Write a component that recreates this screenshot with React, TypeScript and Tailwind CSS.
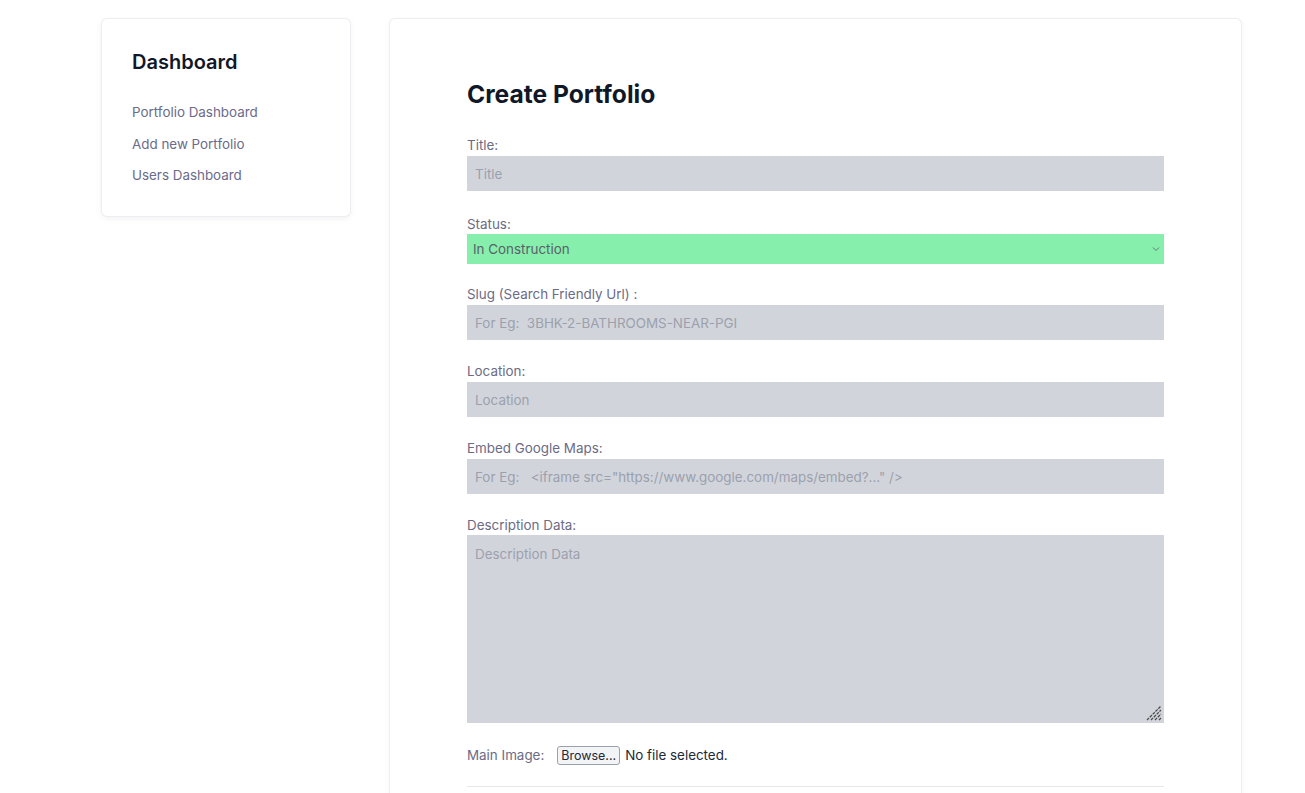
import React from "react";

const links = ["Portfolio Dashboard", "Add new Portfolio", "Users Dashboard"];

interface FieldProps {
    label: string,
    placeholder: string,
    space?: string
}

const Field = ({ label, placeholder, space = "mb-[21px]" }: FieldProps) => (
    <div className={space}>
        <label className="block text-[13.4px] leading-5 text-[#6b6b85]">{label}</label>
        <input
            className="mt-px block w-full h-[35px] bg-[#d1d5db] px-2 text-[13.4px] text-gray-700 placeholder:text-[#9ca0ad] outline-none"
            placeholder={placeholder}
        />
    </div>
);

export default function App() {
    return (
        <div className="min-h-screen bg-white font-['Inter',sans-serif] overflow-hidden">
            <div className="flex items-start gap-[38px] pl-[101px] pt-[18px]">
                <aside className="w-[250px] shrink-0 rounded-md border border-gray-200/70 bg-white px-[30px] pt-[29px] pb-[31px] shadow-[0_2px_6px_rgba(0,0,0,0.05)]">
                    <h2 className="text-xl leading-7 font-semibold text-gray-900">Dashboard</h2>
                    <ul className="mt-[26px] flex flex-col gap-[11.5px]">
                        {links.map((l) => (
                            <li key={l} className="text-[13.4px] leading-5 text-[#6b6b8a]">{l}</li>
                        ))}
                    </ul>
                </aside>

                <main className="w-[853px] shrink-0 rounded-md border border-gray-200/70 bg-white px-[77px] pt-[59px] pb-10 shadow-[0_2px_6px_rgba(0,0,0,0.04)]">
                    <h1 className="text-[24.6px] leading-8 font-bold text-gray-900">Create Portfolio</h1>
                    <div className="mt-[25px]">
                        <Field label="Title:" placeholder="Title" space="mb-[23px]" />

                        <div className="mb-[20px]">
                            <label className="block text-[13.4px] leading-5 text-[#6b6b85]">Status:</label>
                            <div className="relative">
                                <select className="block w-full h-[30px] appearance-none bg-[#86efac] px-[6px] text-[13.4px] text-[#5b5f6a] outline-none">
                                    <option>In Construction</option>
                                    <option>Completed</option>
                                </select>
                                <svg className="pointer-events-none absolute right-[4px] top-[12px]" width="8" height="6" viewBox="0 0 8 6" fill="none">
                                    <path d="M1 1.5 L4 4.5 L7 1.5" stroke="#6b7280" strokeWidth="1" />
                                </svg>
                            </div>
                        </div>

                        <Field label="Slug (Search Friendly Url) :" placeholder="For Eg:  3BHK-2-BATHROOMS-NEAR-PGI" />
                        <Field label="Location:" placeholder="Location" />
                        <Field label="Embed Google Maps:" placeholder={'For Eg:   <iframe src="https://www.google.com/maps/embed?..." />'} />

                        <div className="mb-[22px]">
                            <label className="block text-[13.4px] leading-5 text-[#6b6b85]">Description Data:</label>
                            <div className="relative">
                                <textarea
                                    className="block w-full h-[188px] resize-none bg-[#d1d5db] px-2 py-[9px] text-[13.4px] text-gray-700 placeholder:text-[#9ca0ad] outline-none"
                                    placeholder="Description Data"
                                />
                                <svg className="pointer-events-none absolute right-[1px] bottom-[1px]" width="18" height="18" viewBox="0 0 18 18">
                                    <path d="M2 16 L16 2 M6 16 L16 6 M10 16 L16 10 M14 16 L16 14" stroke="#4b4b4b" strokeWidth="1.3" strokeDasharray="3 1" />
                                </svg>
                            </div>
                        </div>

                        <div className="flex items-center text-[13.4px] leading-5 text-[#6b6b85]">
                            <span>Main Image:</span>
                            <span className="ml-[13px] rounded-[3px] border border-gray-400 bg-gray-100 px-[3px] text-[12.5px] leading-[17px] text-gray-800">Browse...</span>
                            <span className="ml-[5px] text-gray-800">No file selected.</span>
                        </div>

                        <hr className="mt-[21px] border-gray-200" />
                        <div className="h-10" />
                    </div>
                </main>
            </div>
        </div>
    );
}
